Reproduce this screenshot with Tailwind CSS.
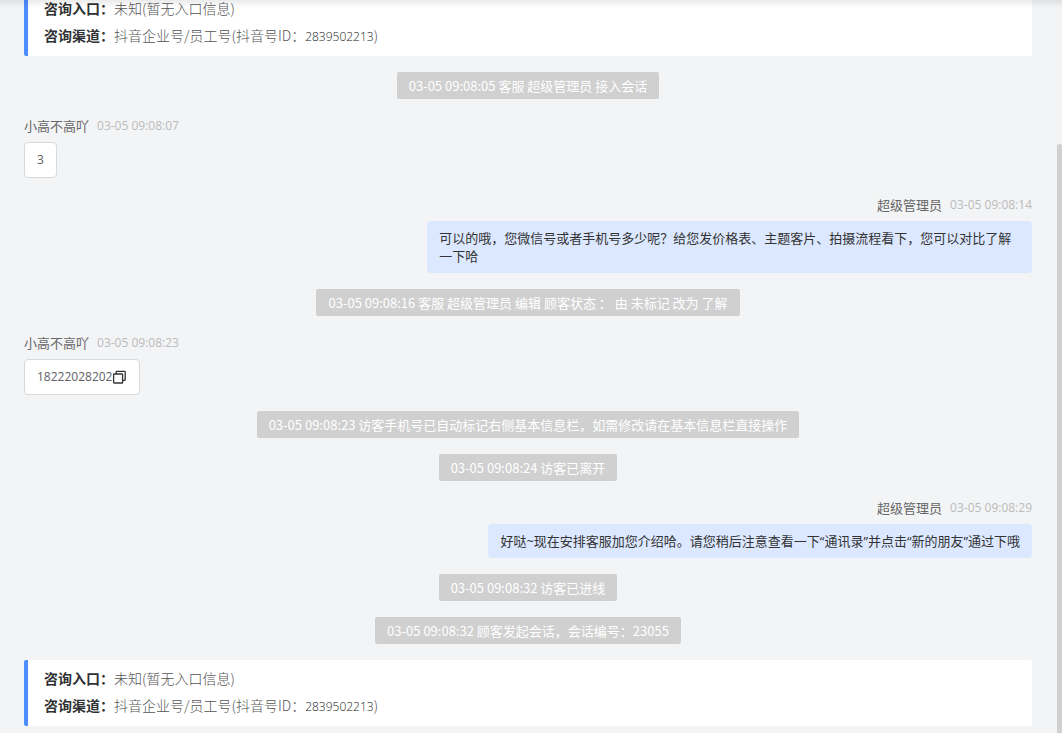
<!DOCTYPE html>
<html lang="zh-CN">
<head>
    <meta charset="UTF-8">
    <meta name="viewport" content="width=device-width, initial-scale=1.0">
    <title>会话</title>
    <script src="https://cdn.jsdelivr.net/npm/@tailwindcss/browser@4"></script>
</head>
<body class="bg-[#f3f4f6] font-['Noto_Sans_CJK_SC',sans-serif] text-[13px] leading-[18px] text-[#333]">
    <main class="relative flex h-screen flex-col justify-end overflow-hidden pr-[30px] pb-[7px] pl-6">
        <!-- Header shadow -->
        <div class="absolute inset-x-0 top-0 z-10 h-2 bg-linear-to-b from-black/8 to-transparent"></div>

        <!-- Messages -->
        <div class="flex shrink-0 flex-col gap-4">
            <section class="rounded-xs border-l-4 border-[#4c8dff] bg-white px-4 pt-[5px] pb-[7px] text-sm leading-[27px]">
                <p><b class="text-[#303133]">咨询入口：</b><span class="font-light text-[#555]">未知(暂无入口信息)</span></p>
                <p><b class="text-[#303133]">咨询渠道：</b><span class="font-light text-[#555]">抖音企业号/员工号(抖音号ID：<span class="font-['Open_Sans',sans-serif] text-xs text-[#222]">2839502213</span>)</span></p>
            </section>

            <p class="self-center rounded-xs bg-[#d0d0d0] px-3 py-[5px] leading-[17px] text-white">03-05 09:08:05 客服 超级管理员 接入会话</p>

            <article class="flex flex-col items-start">
                <header class="flex gap-2 pb-[5px] leading-[22px]"><span class="text-[#666]">小高不高吖</span><time class="font-['Open_Sans',sans-serif] text-xs leading-[22px] text-[#bbb]">03-05 09:08:07</time></header>
                <p class="rounded-sm border border-[#d9d9d9] bg-white px-3 py-2 font-['Open_Sans',sans-serif] text-xs leading-[18px] text-[#606266]">3</p>
            </article>

            <article class="flex flex-col items-end">
                <header class="flex gap-2 pb-[5px] leading-[22px]"><span class="text-[#666]">超级管理员</span><time class="font-['Open_Sans',sans-serif] text-xs leading-[22px] text-[#bbb]">03-05 09:08:14</time></header>
                <p class="max-w-3/5 rounded-sm bg-[#dce8ff] px-3 py-2">可以的哦，您微信号或者手机号多少呢？给您发价格表、主题客片、拍摄流程看下，您可以对比了解一下哈</p>
            </article>

            <p class="self-center rounded-xs bg-[#d0d0d0] px-3 py-[5px] leading-[17px] text-white">03-05 09:08:16 客服 超级管理员 编辑 顾客状态 ： 由 未标记 改为 了解</p>

            <article class="flex flex-col items-start">
                <header class="flex gap-2 pb-[5px] leading-[22px]"><span class="text-[#666]">小高不高吖</span><time class="font-['Open_Sans',sans-serif] text-xs leading-[22px] text-[#bbb]">03-05 09:08:23</time></header>
                <div class="flex items-center rounded-sm border border-[#d9d9d9] bg-white px-3 py-2 text-[#606266]">
                    <span class="font-['Open_Sans',sans-serif] text-xs leading-[18px]">18222028202</span>
                    <button type="button" aria-label="复制" class="text-[#333]">
                        <svg class="size-[15px]" viewBox="0 0 15 15" fill="none" stroke="currentColor" stroke-width="1.3">
                            <rect x="1.6" y="4" width="9" height="9" rx="0.6"></rect>
                            <path d="M4.2 4V2q0-.6.6-.6h7.8q.6 0 .6.6v7.8q0 .6-.6.6h-2"></path>
                        </svg>
                    </button>
                </div>
            </article>

            <p class="self-center rounded-xs bg-[#d0d0d0] px-3 py-[5px] leading-[17px] text-white">03-05 09:08:23 访客手机号已自动标记右侧基本信息栏，如需修改请在基本信息栏直接操作</p>
            <p class="self-center rounded-xs bg-[#d0d0d0] px-3 py-[5px] leading-[17px] text-white">03-05 09:08:24 访客已离开</p>

            <article class="flex flex-col items-end">
                <header class="flex gap-2 pb-[5px] leading-[22px]"><span class="text-[#666]">超级管理员</span><time class="font-['Open_Sans',sans-serif] text-xs leading-[22px] text-[#bbb]">03-05 09:08:29</time></header>
                <p class="max-w-3/5 rounded-sm bg-[#dce8ff] px-3 py-2 font-['Open_Sans','Noto_Sans_CJK_SC',sans-serif]">好哒~现在安排客服加您介绍哈。请您稍后注意查看一下“通讯录”并点击“新的朋友”通过下哦</p>
            </article>

            <p class="self-center rounded-xs bg-[#d0d0d0] px-3 py-[5px] leading-[17px] text-white">03-05 09:08:32 访客已进线</p>
            <p class="self-center rounded-xs bg-[#d0d0d0] px-3 py-[5px] leading-[17px] text-white">03-05 09:08:32 顾客发起会话，会话编号：23055</p>

            <section class="rounded-xs border-l-4 border-[#4c8dff] bg-white px-4 pt-[5px] pb-[7px] text-sm leading-[27px]">
                <p><b class="text-[#303133]">咨询入口：</b><span class="font-light text-[#555]">未知(暂无入口信息)</span></p>
                <p><b class="text-[#303133]">咨询渠道：</b><span class="font-light text-[#555]">抖音企业号/员工号(抖音号ID：<span class="font-['Open_Sans',sans-serif] text-xs text-[#222]">2839502213</span>)</span></p>
            </section>
        </div>

        <!-- Scrollbar thumb -->
        <div class="absolute top-36 right-0 bottom-0 w-[5px] rounded-t-full bg-[#d0d0d0]"></div>
    </main>
</body>
</html>
